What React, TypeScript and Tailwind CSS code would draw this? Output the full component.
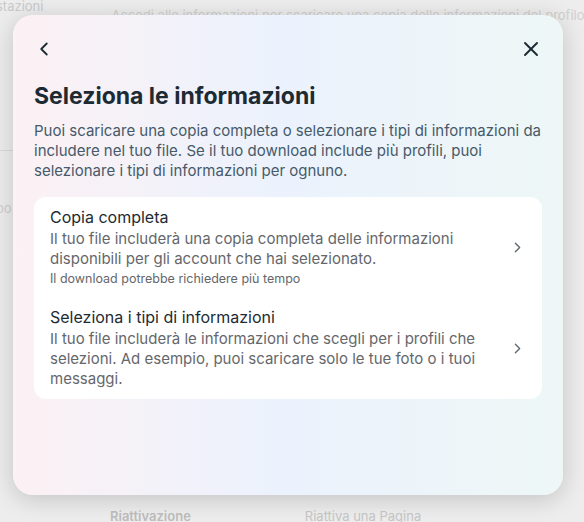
import { ChevronLeft, ChevronRight, X } from "lucide-react";

const font = { fontFamily: '"Inter", "Noto Sans", sans-serif' };

function OptionRow({
  title,
  lines,
  note,
}: {
  title: string;
  lines: string;
  note?: string;
}) {
  return (
    <button type="button" className="flex w-full items-center gap-3 px-4 py-[10px] text-left">
      <div className="flex-1">
        <p className="text-[16px] leading-[20px] text-[#1c2b33]">{title}</p>
        <p className="mt-[2px] text-[15px] leading-[20px] text-[#65676b]">{lines}</p>
        {note && <p className="mt-[1px] text-[12.5px] leading-[17px] text-[#65676b]">{note}</p>}
      </div>
      <ChevronRight className="h-[17px] w-[17px] text-[#5f6a73]" strokeWidth={2} />
    </button>
  );
}

export default function App() {
  return (
    <div className="relative h-[522px] w-[584px] overflow-hidden bg-[#ededed]" style={font}>
      {/* page behind the dialog */}
      <div className="flex h-full flex-col text-[13px]">
        <div className="flex items-start gap-[68px] -ml-1 -mt-[3px]">
          <span className="text-[#c9c9c9]">stazioni</span>
          <span className="mt-[9px] whitespace-nowrap text-[#d0d0d0]">
            Accedi alle informazioni per scaricare una copia delle informazioni del profilo
          </span>
        </div>
        <div className="mt-[124px] h-px w-[13px] bg-[#dadada]" />
        <span className="mt-[48px] -ml-1 text-[#cdcdcd]">oo</span>
        <div className="mt-auto flex gap-[114px] pl-[110px] -mb-[4px]">
          <span className="font-semibold text-[#bdbdbd]">Riattivazione</span>
          <span className="text-[#c6c6c6]">Riattiva una Pagina</span>
        </div>
      </div>

      {/* dialog */}
      <div className="absolute inset-0 pl-[13px] pt-[15px]">
        <div className="h-[480px] w-[550px] rounded-[20px] bg-gradient-to-r from-[#fcf1f4] via-[#ebf2fd] to-[#eef7f6] shadow-[0_4px_24px_rgba(0,0,0,0.18)]">
          <div className="flex items-center justify-between px-[20px] pt-[22px]">
            <ChevronLeft className="h-[22px] w-[22px] text-[#1c2b33]" strokeWidth={2} />
            <X className="h-[24px] w-[24px] text-[#1c2b33]" strokeWidth={1.9} />
          </div>
          <div className="px-[21px] pt-[20px]">
            <h1 className="text-[23px] font-bold leading-[30px] text-[#1c2b33]">Seleziona le informazioni</h1>
            <p className="mt-[10px] text-[15px] leading-[20px] text-[#465a69]">
              Puoi scaricare una copia completa o selezionare i tipi di informazioni da includere nel tuo file. Se il tuo
              download include più profili, puoi selezionare i tipi di informazioni per ognuno.
            </p>
            <div className="mt-[16px] flex flex-col rounded-[12px] bg-white">
              <OptionRow
                title="Copia completa"
                lines="Il tuo file includerà una copia completa delle informazioni disponibili per gli account che hai selezionato."
                note="Il download potrebbe richiedere più tempo"
              />
              <OptionRow
                title="Seleziona i tipi di informazioni"
                lines="Il tuo file includerà le informazioni che scegli per i profili che selezioni. Ad esempio, puoi scaricare solo le tue foto o i tuoi messaggi."
              />
            </div>
          </div>
        </div>
      </div>
    </div>
  );
}
